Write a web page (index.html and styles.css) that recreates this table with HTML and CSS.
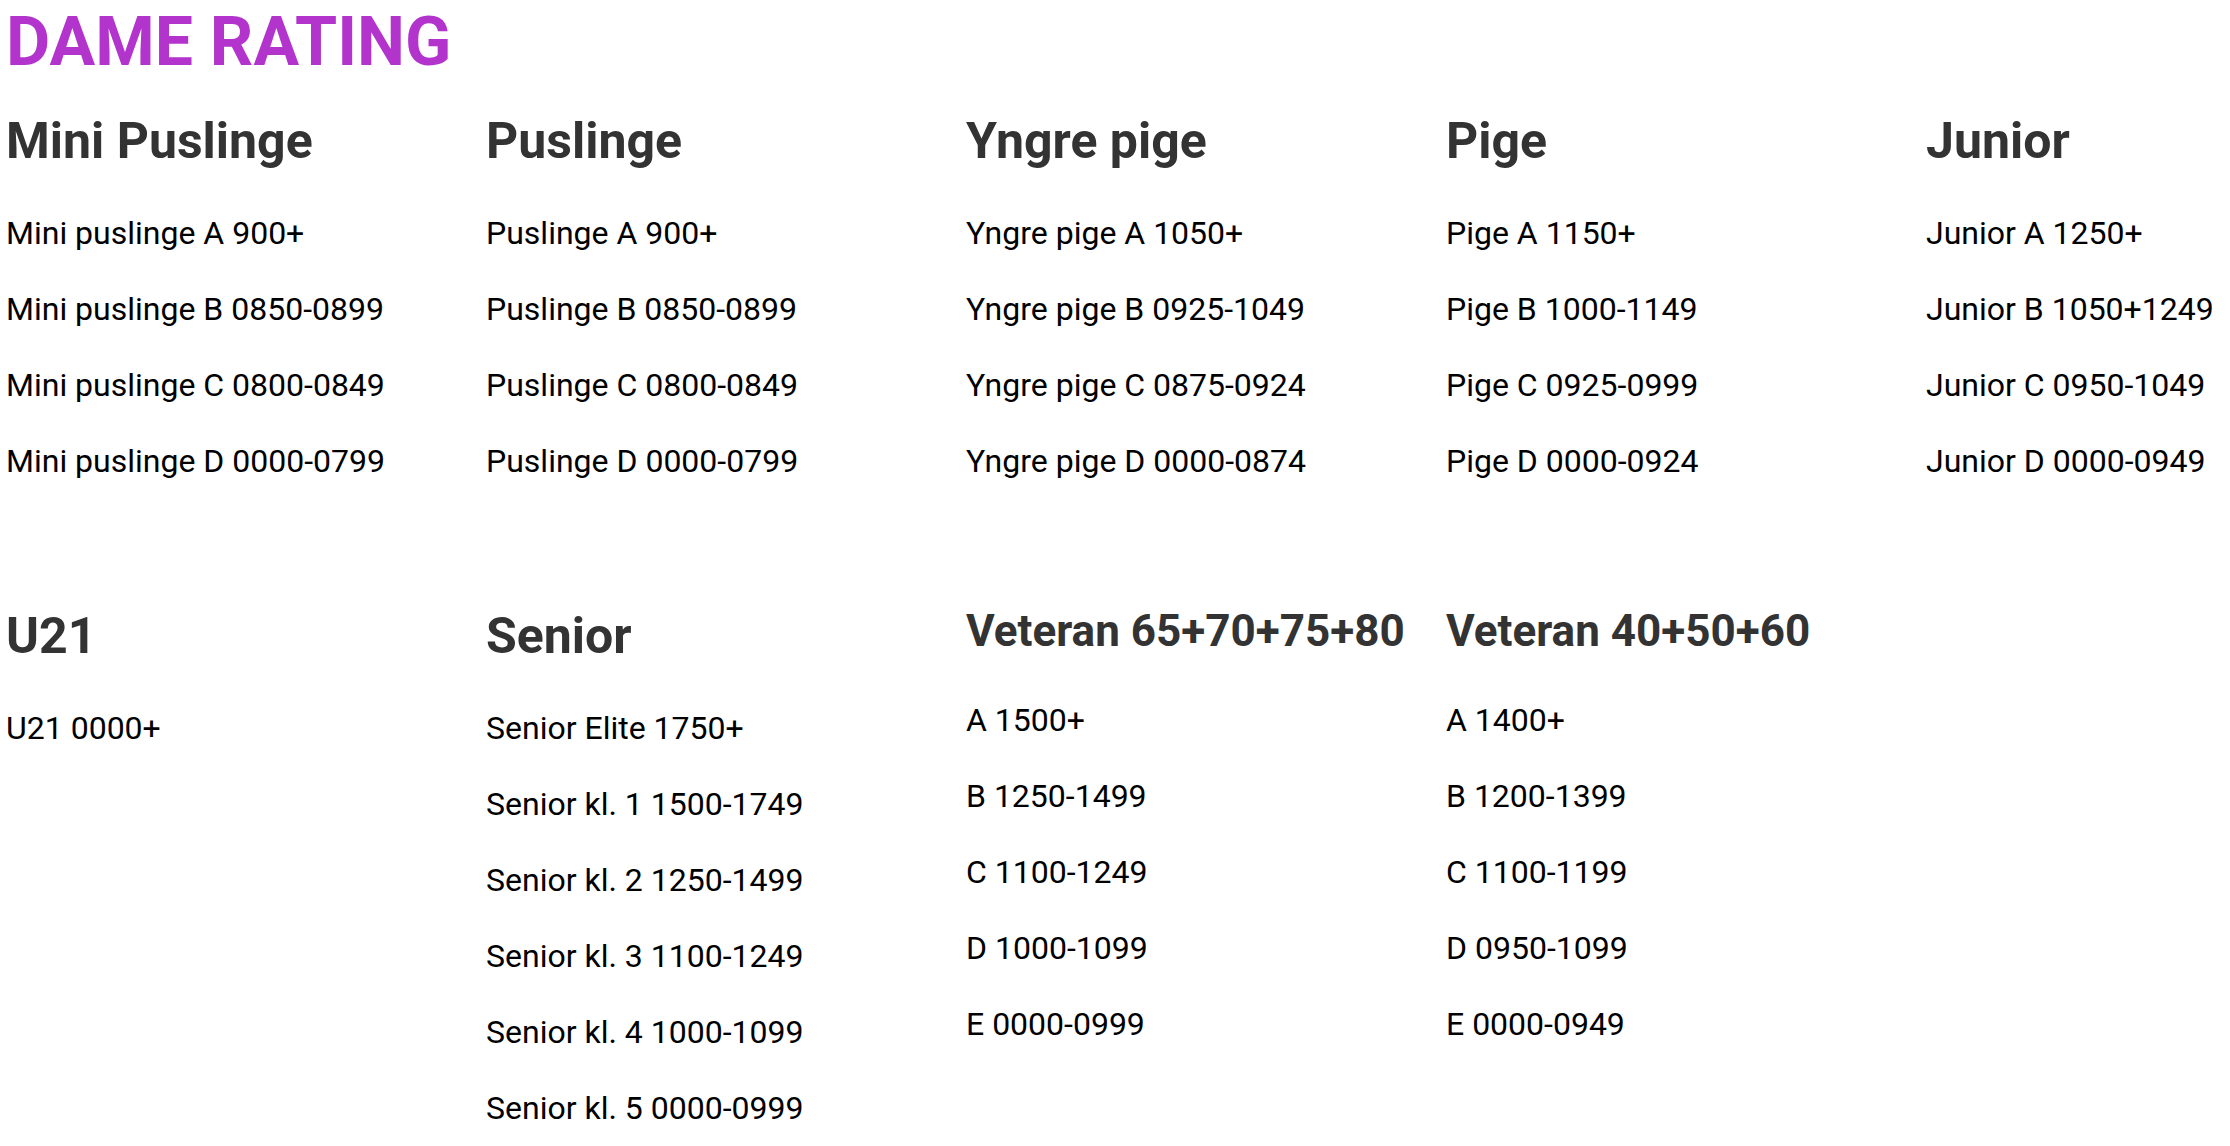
FILE: index.html
```html
<!DOCTYPE html>
<html lang="da">
<head>
<meta charset="utf-8">
<title>Dame Rating</title>
<link rel="stylesheet" href="styles.css">
</head>
<body>
<main class="page">
  <h1 class="title">DAME RATING</h1>
  <div class="grid">
    <section class="group">
      <h2 class="group-title">Mini Puslinge</h2>
      <ul class="list">
        <li>Mini puslinge A 900+</li>
        <li>Mini puslinge B 0850-0899</li>
        <li>Mini puslinge C 0800-0849</li>
        <li>Mini puslinge D 0000-0799</li>
      </ul>
    </section>
    <section class="group">
      <h2 class="group-title">Puslinge</h2>
      <ul class="list">
        <li>Puslinge A 900+</li>
        <li>Puslinge B 0850-0899</li>
        <li>Puslinge C 0800-0849</li>
        <li>Puslinge D 0000-0799</li>
      </ul>
    </section>
    <section class="group">
      <h2 class="group-title">Yngre pige</h2>
      <ul class="list">
        <li>Yngre pige A 1050+</li>
        <li>Yngre pige B 0925-1049</li>
        <li>Yngre pige C 0875-0924</li>
        <li>Yngre pige D 0000-0874</li>
      </ul>
    </section>
    <section class="group">
      <h2 class="group-title">Pige</h2>
      <ul class="list">
        <li>Pige A 1150+</li>
        <li>Pige B 1000-1149</li>
        <li>Pige C 0925-0999</li>
        <li>Pige D 0000-0924</li>
      </ul>
    </section>
    <section class="group">
      <h2 class="group-title">Junior</h2>
      <ul class="list">
        <li>Junior A 1250+</li>
        <li>Junior B 1050+1249</li>
        <li>Junior C 0950-1049</li>
        <li>Junior D 0000-0949</li>
      </ul>
    </section>
    <section class="group">
      <h2 class="group-title">U21</h2>
      <ul class="list">
        <li>U21 0000+</li>
      </ul>
    </section>
    <section class="group">
      <h2 class="group-title">Senior</h2>
      <ul class="list">
        <li>Senior Elite 1750+</li>
        <li>Senior kl. 1 1500-1749</li>
        <li>Senior kl. 2 1250-1499</li>
        <li>Senior kl. 3 1100-1249</li>
        <li>Senior kl. 4 1000-1099</li>
        <li>Senior kl. 5 0000-0999</li>
      </ul>
    </section>
    <section class="group">
      <h3 class="group-title small">Veteran 65+70+75+80</h3>
      <ul class="list">
        <li>A 1500+</li>
        <li>B 1250-1499</li>
        <li>C 1100-1249</li>
        <li>D 1000-1099</li>
        <li>E 0000-0999</li>
      </ul>
    </section>
    <section class="group">
      <h3 class="group-title small">Veteran 40+50+60</h3>
      <ul class="list">
        <li>A 1400+</li>
        <li>B 1200-1399</li>
        <li>C 1100-1199</li>
        <li>D 0950-1099</li>
        <li>E 0000-0949</li>
      </ul>
    </section>
  </div>
</main>
</body>
</html>
```
FILE: styles.css
```css
html, body {
  margin: 0;
  padding: 0;
  background: #ffffff;
  overflow: hidden;
}

body {
  font-family: Roboto, "Liberation Sans", Arial, sans-serif;
  color: #000000;
}

.page {
  padding: 2px 0 0 6px;
}

.title {
  margin: 0 0 27px;
  font-size: 68px;
  line-height: 1.2;
  font-weight: 700;
  color: #b234cc;
}

.grid {
  display: grid;
  grid-template-columns: repeat(4, 480px) 1fr;
  row-gap: 89px;
  align-items: start;
}

.group-title {
  margin: 0 0 42px;
  font-size: 50px;
  line-height: 1.2;
  font-weight: 700;
  color: #333333;
}

.group-title.small {
  font-size: 44px;
  margin-top: -1px;
  margin-bottom: 43px;
}

.list {
  list-style: none;
  margin: 0;
  padding: 0;
}

.list li {
  font-size: 32px;
  line-height: 40px;
  margin-bottom: 36px;
  white-space: nowrap;
}
```
